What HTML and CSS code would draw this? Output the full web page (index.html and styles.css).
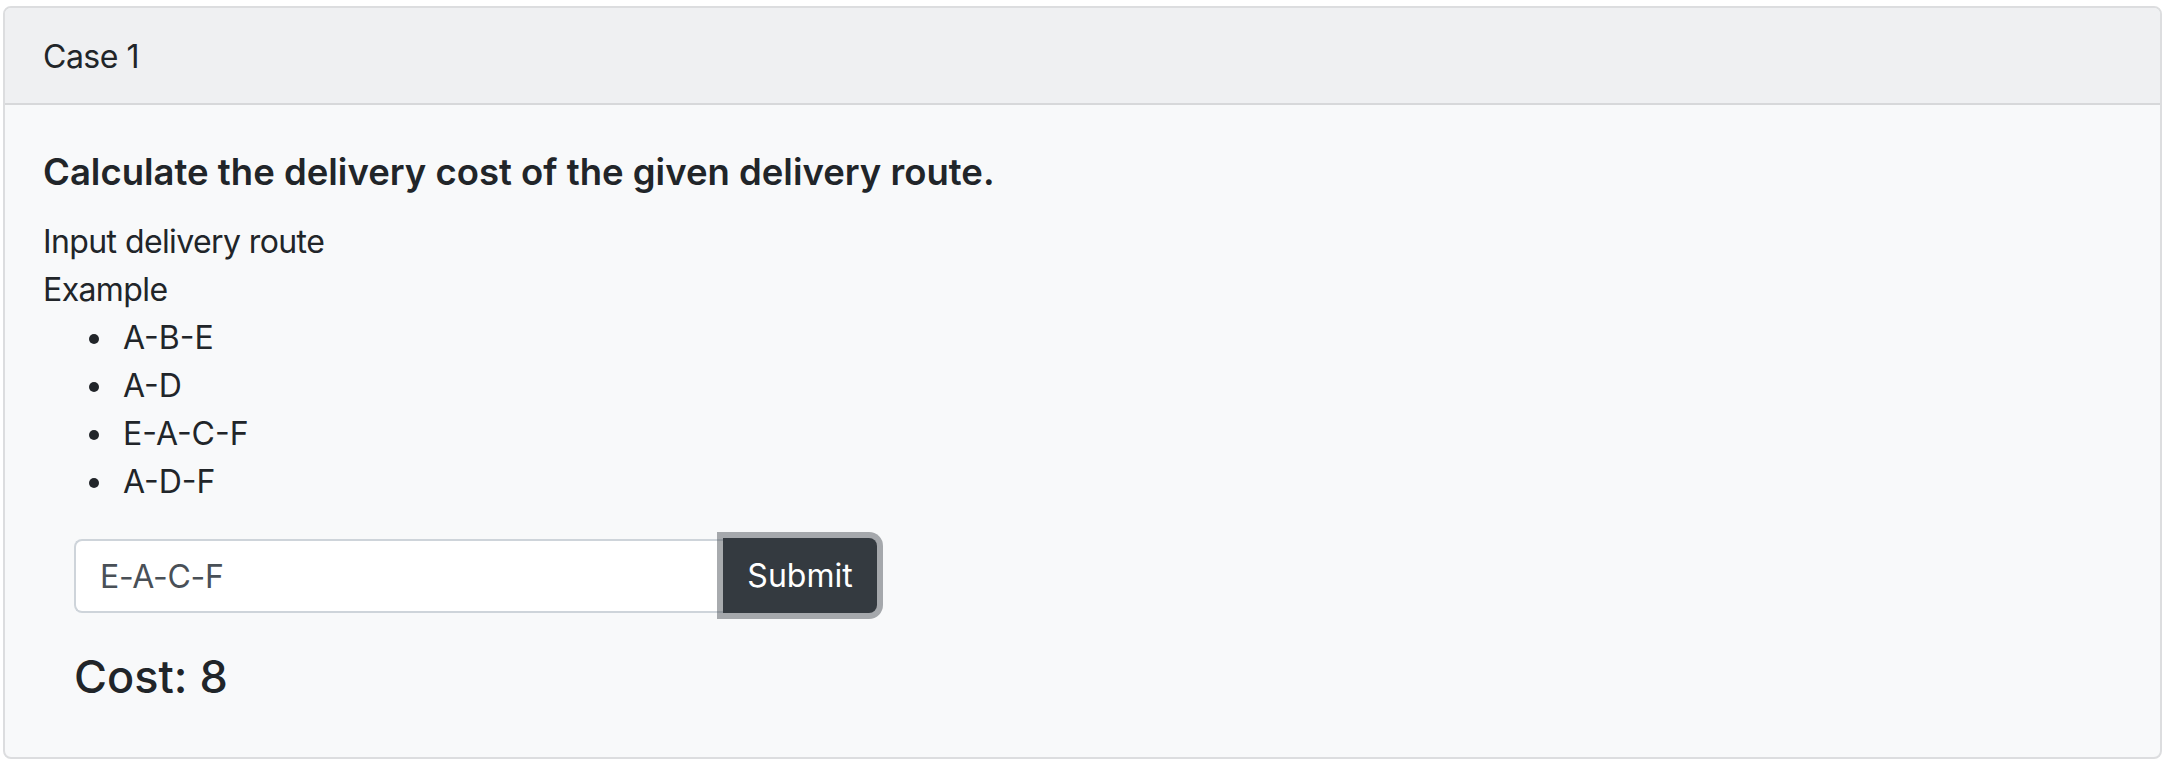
FILE: index.html
```html
<!DOCTYPE html>
<html lang="en">
<head>
<meta charset="utf-8">
<title>Case 1</title>
<link rel="stylesheet" href="styles.css">
</head>
<body>
<div class="card">
  <div class="card-header">Case 1</div>
  <div class="card-body">
    <h5 class="card-title">Calculate the delivery cost of the given delivery route.</h5>
    <div class="line">Input delivery route</div>
    <div class="line">Example</div>
    <ul class="examples">
      <li>A-B-E</li>
      <li>A-D</li>
      <li>E-A-C-F</li>
      <li>A-D-F</li>
    </ul>
    <form class="route-form">
      <div class="input-group">
        <input class="form-control" type="text" value="E-A-C-F">
        <button class="btn-submit" type="button">Submit</button>
      </div>
      <h3 class="cost">Cost: 8</h3>
    </form>
  </div>
</div>
</body>
</html>
```
FILE: styles.css
```css
* { box-sizing: border-box; }

html, body {
  margin: 0;
  padding: 0;
  background: #ffffff;
}

body {
  font-family: Inter, "Noto Sans", "Liberation Sans", sans-serif;
  font-size: 32px;
  line-height: 48px;
  color: #212529;
}

.card {
  margin: 6px 0 0 3px;
  width: 2159px;
  border: 2px solid #dcdddf;
  border-radius: 8px;
  background: #f8f9fa;
  overflow: hidden;
}

.card-header {
  background: #eff0f2;
  border-bottom: 2px solid #d7d8da;
  padding: 25px 38px 22px;
  letter-spacing: -0.5px;
}

.card-body {
  padding: 45px 38px 0;
}

.card-title {
  margin: 0 0 24px;
  font-size: 36.5px;
  line-height: 44px;
  font-weight: 600;
}

.line {
  margin: 0;
  letter-spacing: -0.6px;
}

.examples {
  margin: 0;
  padding-left: 80px;
  list-style: none;
}

.examples li::before {
  content: "";
  display: inline-block;
  width: 10px;
  height: 10px;
  margin: 0 24px 0 -34px;
  border-radius: 50%;
  background: #212529;
  vertical-align: middle;
  position: relative;
  top: -1px;
}

.route-form {
  padding: 33px 0 0 31px;
}

.input-group {
  display: flex;
  width: 803px;
  align-items: stretch;
}

.form-control {
  flex: 1 1 auto;
  min-width: 0;
  height: 74px;
  padding: 0 24px;
  font-family: inherit;
  font-size: 32px;
  letter-spacing: -0.3px;
  color: #495057;
  background: #ffffff;
  border: 2px solid #ced4da;
  border-right: 0;
  border-radius: 8px 0 0 8px;
  outline: none;
}

.btn-submit {
  position: relative;
  z-index: 2;
  width: 154px;
  height: 75px;
  margin-top: -1px;
  padding: 0;
  font-family: inherit;
  font-size: 32px;
  color: #ffffff;
  background: #343a40;
  border: 0;
  border-radius: 0 8px 8px 0;
  box-shadow: 0 0 0 6px rgba(82, 88, 93, 0.5);
}

.cost {
  margin: 37px 0 0;
  padding-bottom: 54px;
  font-size: 45px;
  line-height: 53px;
  font-weight: 500;
}
```
